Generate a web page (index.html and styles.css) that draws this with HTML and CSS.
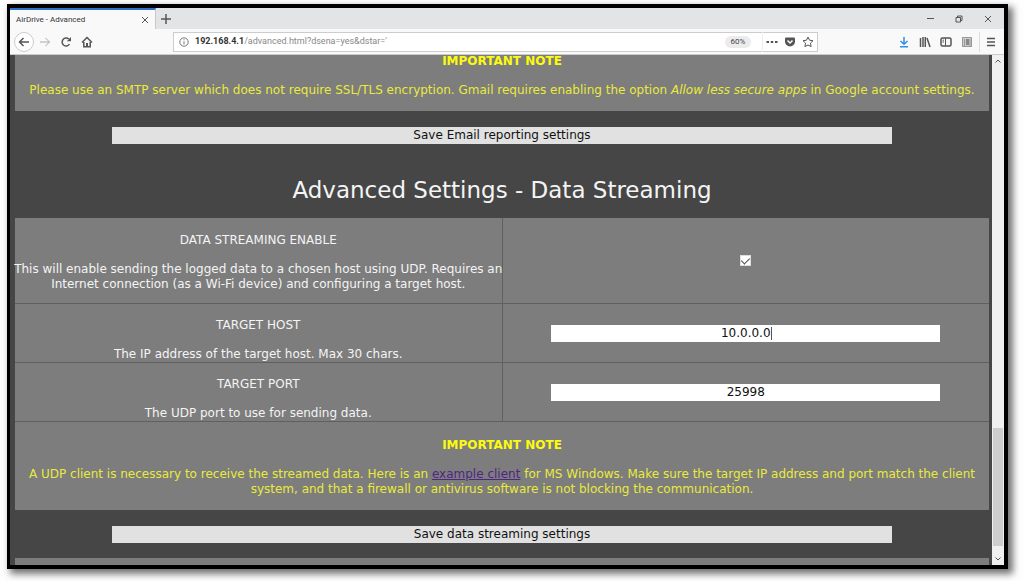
FILE: index.html
```html
<!DOCTYPE html>
<html lang="en">
<head>
<meta charset="utf-8">
<title>AirDrive - Advanced</title>
<link rel="stylesheet" href="styles.css">
</head>
<body>
<div class="window">
  <header class="tabbar">
    <div class="tab">
      <span class="tab-title">AirDrive - Advanced</span>
      <button class="icon-btn tab-close" aria-label="Close tab"><svg width="8" height="8" viewBox="0 0 8 8"><path d="M1 1l6 6M7 1l-6 6"/></svg></button>
    </div>
    <button class="icon-btn" aria-label="New tab"><svg width="10" height="10" viewBox="0 0 10 10"><path class="thick" d="M5 0v10M0 5h10"/></svg></button>
    <div class="controls">
      <button class="icon-btn" aria-label="Minimize"><svg width="8" height="8" viewBox="0 0 8 8"><path d="M1 3.500h7"/></svg></button>
      <button class="icon-btn" aria-label="Restore"><svg width="8" height="8" viewBox="0 0 8 8"><path d="M1 2.500h4.500V7H1zM2.500 2.500V1H7v4.500H5.500"/></svg></button>
      <button class="icon-btn" aria-label="Close"><svg width="8" height="8" viewBox="0 0 8 8"><path d="M1 1l6 6M7 1l-6 6"/></svg></button>
    </div>
  </header>

  <nav class="toolbar">
    <div class="group">
      <button class="icon-btn back" aria-label="Back"><svg width="12" height="12" viewBox="0 0 12 12"><path class="thick" d="M11 6H1.500M5.500 2l-4 4 4 4"/></svg></button>
      <button class="icon-btn faded" aria-label="Forward"><svg width="12" height="12" viewBox="0 0 12 12"><path d="M1 6h9.500M6.500 2l4 4-4 4"/></svg></button>
      <button class="icon-btn" aria-label="Reload"><svg width="12" height="12" viewBox="0 0 12 12"><path class="thick" d="M9.500 8.200A4 4 0 1 1 8.800 3"/><path class="solid" d="M6.800 5.200H11V1z"/></svg></button>
      <button class="icon-btn" aria-label="Home"><svg width="12" height="12" viewBox="0 0 12 12"><path class="thick" d="M1 6.500L6 1.500l5 5M2.800 6v4.700h6.400V6"/><path class="solid" d="M5 7h2v4H5z"/></svg></button>
    </div>
    <div class="urlbar">
      <svg class="info" width="10" height="10" viewBox="0 0 10 10"><circle cx="5" cy="5" r="4.200"/><path d="M5 4.300v3M5 2.300v1"/></svg>
      <div class="url"><b>192.168.4.1</b>/advanced.html?dsena=yes&amp;dstar='</div>
      <span class="zoom">60%</span>
      <div class="url-actions">
        <button class="icon-btn" aria-label="Page actions"><svg width="12" height="12" viewBox="0 0 12 12"><path class="solid" d="M.5 5h2.500v2H.5zM4.750 5h2.500v2h-2.500zM9 5h2.500v2H9z"/></svg></button>
        <button class="icon-btn" aria-label="Save to Pocket"><svg width="12" height="12" viewBox="0 0 12 12"><path class="solid" d="M2 1.500h8q1 0 1 1v3a5 5 0 0 1-10 0v-3q0-1 1-1z"/><path class="light" d="M3.500 4.500L6 7l2.500-2.500"/></svg></button>
        <button class="icon-btn" aria-label="Bookmark"><svg width="12" height="12" viewBox="0 0 12 12"><path d="M6 1l1.500 3.200 3.500.5-2.500 2.400.6 3.500L6 9l-3.100 1.600.6-3.500L1 4.700l3.500-.5z"/></svg></button>
      </div>
    </div>
    <div class="group">
      <button class="icon-btn download" aria-label="Downloads"><svg width="12" height="12" viewBox="0 0 12 12"><path class="thick" d="M6 1v7M2.500 5L6 8.300 9.500 5M2 10.800h8"/></svg></button>
      <button class="icon-btn" aria-label="Library"><svg width="12" height="12" viewBox="0 0 12 12"><path class="thick" d="M1.500 2v9M4 1v10M6.300 1v10M8 2l3 9"/></svg></button>
      <button class="icon-btn" aria-label="Sidebars"><svg width="12" height="12" viewBox="0 0 12 12"><rect class="thick" x="1" y="2" width="10" height="8" rx="1.500"/><path d="M5.500 2v8M2.500 4.200H4M2.500 6H4"/></svg></button>
      <button class="icon-btn panel-icon" aria-label="Panel"><svg width="12" height="12" viewBox="0 0 12 12"><path class="pale" d="M1 1h10v10H1z"/><path class="mid" d="M5 3h3v6H5z"/><path d="M1.500 1.500h9v9h-9zM3.500 3v7M9 3v7"/></svg></button>
    </div>
    <div class="menu">
      <button class="icon-btn" aria-label="Menu"><svg width="12" height="12" viewBox="0 0 12 12"><path class="thick" d="M2 2.500h8M2 6h8M2 9.500h8"/></svg></button>
    </div>
  </nav>

  <div class="viewport">
    <main class="page">
      <section class="note first">
        <h2>IMPORTANT NOTE</h2>
        <p>Please use an SMTP server which does not require SSL/TLS encryption. Gmail requires enabling the option <i>Allow less secure apps</i> in Google account settings.</p>
      </section>
      <button class="save">Save Email reporting settings</button>

      <h1>Advanced Settings - Data Streaming</h1>
      <table class="settings">
        <tr class="roomy">
          <td><label for="enable">DATA STREAMING ENABLE</label>
            <p>This will enable sending the logged data to a chosen host using UDP. Requires an<br>Internet connection (as a Wi-Fi device) and configuring a target host.</p></td>
          <td class="value"><input class="check" id="enable" type="checkbox" checked></td>
        </tr>
        <tr>
          <td><label for="host">TARGET HOST</label>
            <p>The IP address of the target host. Max 30 chars.</p></td>
          <td class="value"><div class="field"><input class="text" id="host" type="text" maxlength="30" value="10.0.0.0"><span class="caret"></span></div></td>
        </tr>
        <tr>
          <td><label for="port">TARGET PORT</label>
            <p>The UDP port to use for sending data.</p></td>
          <td class="value"><div class="field"><input class="text" id="port" type="text" value="25998"></div></td>
        </tr>
      </table>
      <section class="note">
        <h2>IMPORTANT NOTE</h2>
        <p>A UDP client is necessary to receive the streamed data. Here is an <a href="#client">example client</a> for MS Windows. Make sure the target IP address and port match the client system, and that a firewall or antivirus software is not blocking the communication.</p>
      </section>
      <button class="save">Save data streaming settings</button>
      <section class="next"></section>
    </main>
    <div class="scrollbar">
      <svg width="8" height="6" viewBox="0 0 8 6"><path d="M1.500 4.500L4 2l2.500 2.500"/></svg>
      <div class="track"><div class="thumb"></div></div>
      <svg width="8" height="6" viewBox="0 0 8 6"><path d="M1.500 1.500L4 4l2.500-2.500"/></svg>
    </div>
  </div>
</div>
</body>
</html>
```
FILE: styles.css
```css
* { box-sizing: border-box; }

body {
  margin: 0;
  height: 100vh;
  padding: 4px 16px 12px 7px;
  background: #fefefe;
  font-family: "DejaVu Sans", Verdana, sans-serif;
  font-size: 12px;
  line-height: 15px;
  overflow: hidden;
}

h1, h2, p { margin: 0; font-weight: normal; }
button, input { font: inherit; margin: 0; padding: 0; border: 0; border-radius: 0; }

.window {
  height: 100%;
  display: flex;
  flex-direction: column;
  border: 4px solid #000;
  border-left-width: 3px;
  box-shadow: 4px 4px 7px 1px rgba(0, 0, 0, 0.55);
}

svg { display: block; fill: none; stroke: #555; stroke-width: 1; }
.thick { stroke-width: 1.5; }
.solid { fill: #555; stroke: none; }
.light { stroke: #fff; stroke-width: 1.5; }
.pale { fill: #ccc; stroke: none; }
.mid { fill: #888; stroke: none; }

.icon-btn {
  width: 20px;
  height: 20px;
  display: flex;
  align-items: center;
  justify-content: center;
  background: none;
}

/* Browser chrome */
.tabbar {
  display: flex;
  align-items: center;
  height: 21px;
  flex: none;
  background: #e3e4e6;
}
.tab {
  display: flex;
  align-items: center;
  justify-content: space-between;
  width: 146px;
  height: 100%;
  padding-left: 6px;
  background: #f9f9fa;
  border-top: 2px solid #2f6fc4;
  border-right: 1px solid #c8c8cc;
}
.tab-title { font-family: Roboto, sans-serif; font-size: 8px; color: #333; }
.controls { display: flex; gap: 9px; margin-left: auto; padding-right: 6px; }

.toolbar {
  display: flex;
  align-items: center;
  height: 26px;
  flex: none;
  padding: 0 3px 0 4px;
  background: #f9f9fa;
  border-bottom: 1px solid #ccc;
  font-family: Roboto, "Open Sans", sans-serif;
}
.group { display: flex; gap: 1px; }
.back { border: 1px solid #ccc; border-radius: 50%; background: #fff; }
.faded svg { stroke: #aaa; }
.download svg { stroke: #2f8fe0; }
.panel-icon svg { stroke: #999; }
.menu { margin-left: 2px; padding-left: 1px; border-left: 1px solid #ddd; }

.urlbar {
  flex: 1;
  display: flex;
  align-items: center;
  height: 20px;
  margin: 0 76px;
  padding-left: 5px;
  background: #fff;
  border: 1px solid #ccc;
}
.info { stroke: #777; }
.url { flex: 1; padding-left: 6px; font-size: 9px; color: #888; }
.url b { color: #333; }
.zoom {
  width: 26px;
  margin-right: 11px;
  border-radius: 6px;
  background: #ececee;
  font-size: 8px;
  line-height: 12px;
  text-align: center;
  color: #444;
}
.url-actions { display: flex; border-left: 1px solid #eee; }
.url-actions .icon-btn { width: 18px; }

/* Page */
.viewport { flex: 1; min-height: 0; display: flex; background: #464646; }
.page {
  flex: 1;
  min-width: 0;
  display: flex;
  flex-direction: column;
  padding: 0 3px 0 5px;
  overflow: hidden;
}
.page > * { flex: none; }

h1 {
  padding: 15px 0 12px;
  font-size: 23px;
  line-height: 32px;
  text-align: center;
  color: #f4f4f4;
}

.note {
  padding: 16px 8px 13px;
  background: #7d7d7d;
  color: #eaea3c;
  text-align: center;
}
.note.first { margin-top: -17px; }
.note h2 { margin-bottom: 14px; font-size: 12px; font-weight: bold; color: #fbfb10; }
.note a { color: #4f2683; }

.save {
  width: 80%;
  height: 17px;
  margin: 16px auto 15px;
  background: #e1e1e1;
  color: #111;
}

.settings {
  width: 100%;
  table-layout: fixed;
  border-collapse: collapse;
  background: #7d7d7d;
  color: #f4f4f4;
  text-align: center;
  border-bottom: 1px solid #606060;
}
.settings td { height: 59px; padding: 14px 0 0; vertical-align: top; }
.settings td + td { border-left: 1px solid #606060; }
.settings tr + tr td { border-top: 1px solid #606060; }
.settings .roomy td { padding: 15px 0 11px; }
.settings p { margin: 14px -4px 0; white-space: nowrap; }
.settings label { display: block; }
.settings td.value { padding: 0; vertical-align: middle; }

.field { position: relative; width: 80%; margin: 0 auto; }
.text {
  display: block;
  width: 100%;
  height: 17px;
  background: #fff;
  color: #111;
  text-align: center;
}
.caret {
  position: absolute;
  left: calc(50% + 25px);
  top: 2px;
  width: 1px;
  height: 13px;
  background: #555;
}
.check {
  appearance: none;
  display: flex;
  justify-content: center;
  width: 11px;
  height: 11px;
  margin: 0 auto;
  background: #fff;
  border: 1px solid #ddd;
}
.check:checked::after {
  content: "";
  width: 4px;
  height: 7px;
  border: solid #444;
  border-width: 0 1px 1px 0;
  transform: rotate(45deg);
}

.next { height: 40px; background: #7d7d7d; }

.scrollbar {
  width: 12px;
  display: flex;
  flex-direction: column;
  align-items: center;
  padding: 3px 0;
  background: #f0f0f0;
}
.track {
  flex: 1;
  width: 100%;
  display: flex;
  flex-direction: column;
  justify-content: flex-end;
  padding: 10px 1px;
}
.thumb { height: 25%; background: #cdcdcd; }
```
